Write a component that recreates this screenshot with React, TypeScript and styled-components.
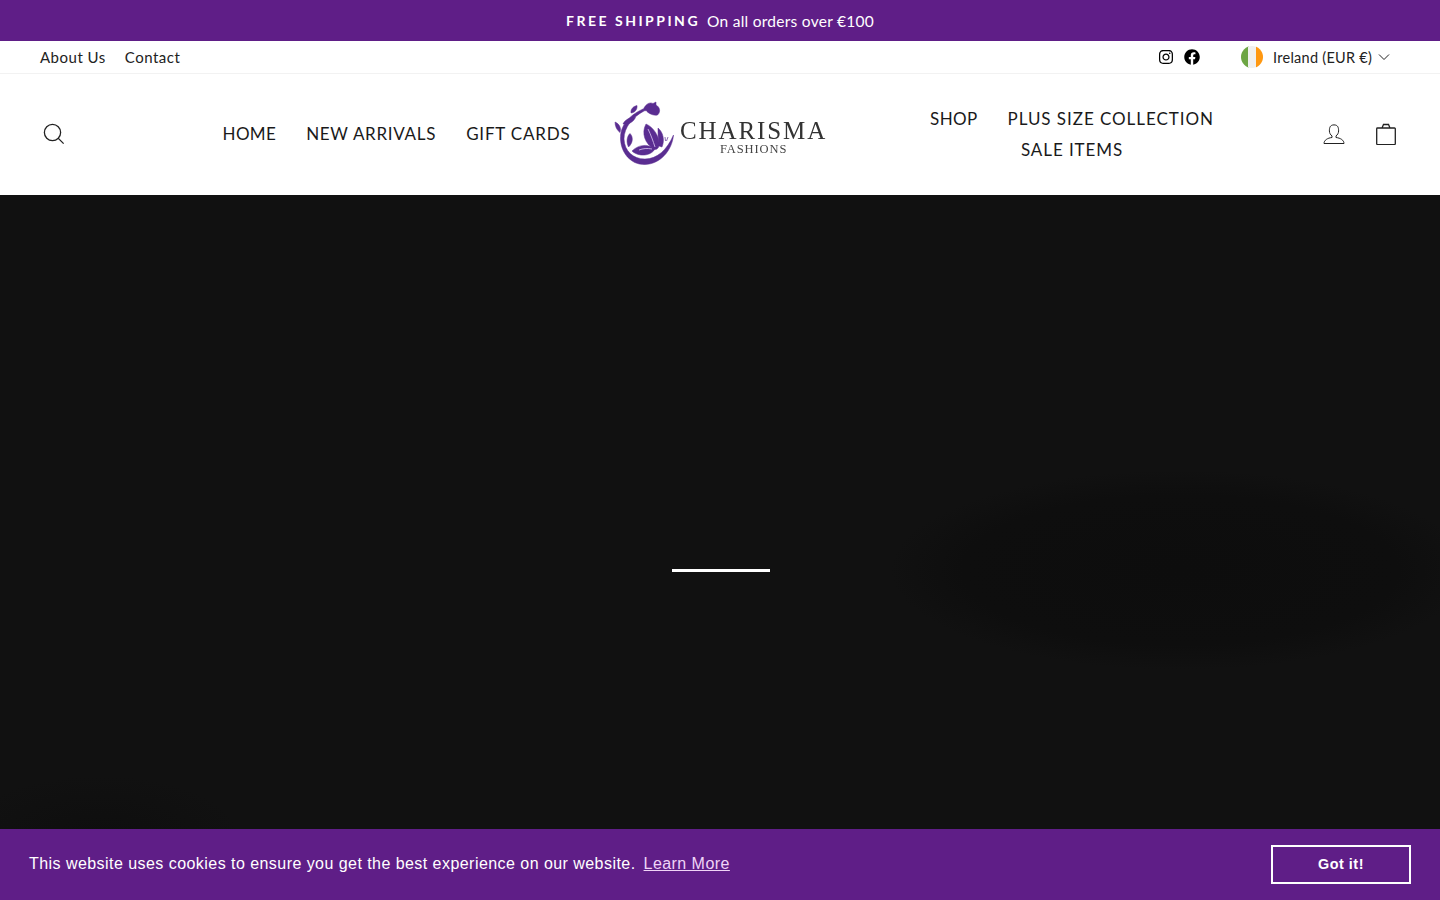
import React from "react";
import styled, { createGlobalStyle } from "styled-components";
import { FaFacebook, FaInstagram } from "react-icons/fa";

const Global = createGlobalStyle`
  html, body { margin: 0; padding: 0; background: #fff; }
  body { font-family: "Lato", "Open Sans", sans-serif; color: #111; overflow: hidden; }
  * { box-sizing: border-box; }
  a { color: inherit; text-decoration: none; }
`;

const Page = styled.div`
  height: 900px;
  display: flex;
  flex-direction: column;
  position: relative;
`;

const Announcement = styled.div`
  height: 41px;
  background: #5f1e87;
  color: #fff;
  display: flex;
  align-items: center;
  justify-content: center;
  gap: 7px;
  font-size: 15.5px;
  letter-spacing: 0.26px;
`;

const AnnounceStrong = styled.strong`
  font-weight: 700;
  font-size: 14px;
  letter-spacing: 2.5px;
`;

const Toolbar = styled.div`
  height: 33px;
  border-bottom: 1px solid #f2f2f2;
  display: flex;
  align-items: center;
  padding: 0 40px;
  font-size: 15px;
  color: #222;
  letter-spacing: 0.5px;
`;

const ToolLinks = styled.div`
  display: flex;
  gap: 19px;
`;

const Socials = styled.div`
  margin-left: auto;
  display: flex;
  gap: 10px;
  align-items: center;
  font-size: 16px;
  color: #000;
`;

const Currency = styled.div`
  margin-left: 41px;
  margin-right: 9px;
  width: 150px;
  display: flex;
  align-items: center;
  font-size: 14.5px;
  letter-spacing: 0.27px;
  color: #222;
`;

const CurrencyLabel = styled.span`
  margin-left: 10px;
  margin-right: 6px;
  white-space: nowrap;
`;

const Header = styled.header`
  height: 121px;
  display: flex;
  align-items: center;
  padding: 0 43px 2px 40px;
`;

const SearchCol = styled.div`
  width: 168px;
  display: flex;
`;

const Nav = styled.nav<{ $width: number; $offset?: number; $wrap?: boolean }>`
  width: ${(p) => p.$width}px;
  margin-left: ${(p) => p.$offset ?? 0}px;
  display: flex;
  flex-wrap: ${(p) => (p.$wrap ? "wrap" : "nowrap")};
  justify-content: center;
`;

const NavItem = styled.a<{ $track: number }>`
  padding: 0 15px;
  line-height: 31px;
  font-size: 17px;
  letter-spacing: ${(p) => p.$track}px;
  white-space: nowrap;
  color: #1a1a1a;
`;

const Logo = styled.div`
  width: 230px;
  margin: 0 20px;
  padding-left: 5px;
  display: flex;
  align-items: center;
  filter: blur(0.35px);
`;

const LogoWords = styled.div`
  display: flex;
  flex-direction: column;
  align-items: center;
  margin-top: 7px;
`;

const LogoTitle = styled.span`
  font-family: "Liberation Serif", serif;
  font-size: 25px;
  line-height: 26px;
  letter-spacing: 1.9px;
  color: #333;
`;

const LogoSub = styled.span`
  font-family: "Liberation Serif", serif;
  font-size: 12.5px;
  line-height: 13px;
  margin-top: -1px;
  letter-spacing: 0.9px;
  color: #444;
`;

const Icons = styled.div`
  margin-left: auto;
  display: flex;
  gap: 30px;
  align-items: center;
`;

const Hero = styled.main`
  flex: 1;
  position: relative;
  background:
    radial-gradient(ellipse 290px 100px at 1180px 375px, #0d0d0d 0%, #0e0e0e 75%, transparent 100%),
    radial-gradient(ellipse 140px 60px at 100px 640px, #0e0e0e 0%, transparent 100%),
    #111;
`;

const Loader = styled.div`
  position: absolute;
  left: 672px;
  top: 374px;
  width: 98px;
  height: 3px;
  background: #fff;
`;

const Cookie = styled.div`
  position: fixed;
  left: 0;
  right: 0;
  bottom: 0;
  height: 71px;
  background: #5f1e87;
  color: #fff;
  display: flex;
  align-items: center;
  padding: 0 29px 2px;
  font-family: "Liberation Sans", Arial, sans-serif;
  font-size: 16px;
  line-height: 24px;
  letter-spacing: 0.45px;
`;

const CookieLink = styled.a`
  color: #f0d4f7;
  text-decoration: underline;
  margin-left: 8px;
`;

const CookieButton = styled.button`
  margin-left: auto;
  margin-top: 2px;
  width: 140px;
  height: 39px;
  background: transparent;
  border: 2px solid #fff;
  color: #fff;
  font-family: "Liberation Sans", Arial, sans-serif;
  font-size: 14.4px;
  font-weight: 700;
  letter-spacing: 0.5px;
  padding: 0 0 2px;
`;

const LineIcon = styled.svg`
  display: block;
  fill: none;
  stroke: #222;
`;

const Flower = () => (
  <svg width="70" height="70" viewBox="0 0 70 70" fill="#5a2d91" stroke="#5a2d91" strokeWidth="0.5">
    <path d="M63.500 36 C62 52 50 65 35 65.500 C21 66 11 54 10.500 40 C10 27 18 17 33 10 L34 12 C23 18 14 28 14 40 C14.500 52 23 60 35 60 C47 60 57 51 63.500 36Z" />
    <path d="M33 11 C35 6 39 2.500 43 4.500 L46 3 L46 6 C50 8 51 13 47.500 16 C43 17 38 14 36 11.500 C35 12 34 12 33 11Z" />
    <path d="M21 14 C20.500 10 23 7.500 27 6.500 C27.500 10.500 25 13.500 21 14Z" />
    <path d="M13 25 C15 20.500 20 18 25.500 18.500 C23 23.500 18.500 25.500 13 25Z" />
    <path d="M10 33.500 C6.500 31 5 27 5 23 C9.500 25 11.500 29 10 33.500Z" />
    <path d="M18.500 48 C16 43 17 37 20 34.500 C23.500 38 23 44 18.500 48Z" />
    <path d="M44 50 C35 45 31 34 36 25 C43 28 50 37 49 47 C48 50 46 51 44 50Z" />
    <path d="M49 47 C48 40 48 34 48 29 C53 33 55 41 52 48Z" />
    <path d="M22 52 C28 46 37 44 45 50 C42 55 36 56.500 31 56 C27 55.500 24 54 22 52Z" />
    <path d="M38 30 C41 36 43 42 45 48" stroke="#cdb8e8" strokeWidth="0.9" fill="none" />
    <path d="M29 51 C33 49.500 37 49 42 50" stroke="#cdb8e8" strokeWidth="0.9" fill="none" />
    <path d="M55 38 L55.500 42 M58 38 L56.500 42" strokeWidth="0.7" fill="none" />
  </svg>
);

const Flag = () => (
  <svg width="22" height="22" viewBox="0 0 22 22">
    <clipPath id="flagc"><circle cx="11" cy="11" r="11" /></clipPath>
    <g clipPath="url(#flagc)">
      <rect width="8" height="22" fill="#6da544" />
      <rect x="7" width="8" height="22" fill="#f0f0f0" />
      <rect x="15" width="7" height="22" fill="#ff9811" />
    </g>
  </svg>
);

export default function App() {
  return (
    <Page>
      <Global />
      <Announcement>
        <AnnounceStrong>FREE SHIPPING</AnnounceStrong>
        <span>On all orders over €100</span>
      </Announcement>
      <Toolbar>
        <ToolLinks>
          <a>About Us</a>
          <a>Contact</a>
        </ToolLinks>
        <Socials>
          <FaInstagram />
          <FaFacebook />
        </Socials>
        <Currency>
          <Flag />
          <CurrencyLabel>Ireland (EUR €)</CurrencyLabel>
          <LineIcon width="12" height="12" viewBox="0 0 12 12" strokeWidth="1">
            <path d="M1 3.500 L6 8.500 L11 3.500" />
          </LineIcon>
        </Currency>
      </Toolbar>
      <Header>
        <SearchCol>
          <LineIcon width="28" height="28" viewBox="0 0 64 64" strokeWidth="3">
            <path d="M47.160 28.580A18.580 18.580 0 1 1 28.580 10a18.580 18.580 0 0 1 18.580 18.580zM54 54L41.940 42" />
          </LineIcon>
        </SearchCol>
        <Nav $width={377}>
          <NavItem $track={0.35}>HOME</NavItem>
          <NavItem $track={0.7}>NEW ARRIVALS</NavItem>
          <NavItem $track={0.8}>GIFT CARDS</NavItem>
        </Nav>
        <Logo>
          <Flower />
          <LogoWords>
            <LogoTitle>CHARISMA</LogoTitle>
            <LogoSub>FASHIONS</LogoSub>
          </LogoWords>
        </Logo>
        <Nav $width={320} $offset={57} $wrap>
          <NavItem $track={0.35}>SHOP</NavItem>
          <NavItem $track={0.95}>PLUS SIZE COLLECTION</NavItem>
          <NavItem $track={0.9}>SALE ITEMS</NavItem>
        </Nav>
        <Icons>
          <LineIcon width="22" height="22" viewBox="0 0 22 22" strokeWidth="1">
            <path d="M13 14.500v-1.600c1.600-1 2.600-3 2.600-5 0-3.200-.6-6-4.600-6s-4.600 2.800-4.600 6c0 2 1 4 2.600 5v1.600C4.500 15 1 17.200 1 20.500h20c0-3.300-3.500-5.500-8-6z" />
          </LineIcon>
          <LineIcon width="22" height="22" viewBox="0 0 22 22" strokeWidth="1.300">
            <path d="M2.500 5h17a.8.8 0 0 1 .8.8v15a.8.8 0 0 1-.8.8h-17a.8.8 0 0 1-.8-.8v-15a.8.8 0 0 1 .8-.8zM7 5l1.500-3.500h5L15 5" />
          </LineIcon>
        </Icons>
      </Header>
      <Hero>
        <Loader />
      </Hero>
      <Cookie>
        <span>This website uses cookies to ensure you get the best experience on our website.</span>
        <CookieLink>Learn More</CookieLink>
        <CookieButton>Got it!</CookieButton>
      </Cookie>
    </Page>
  );
}
